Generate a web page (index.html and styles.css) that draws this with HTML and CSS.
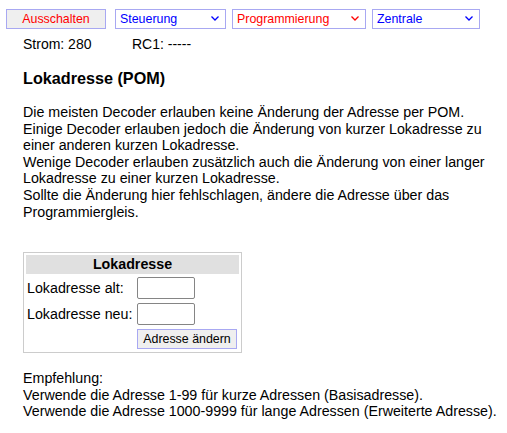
FILE: index.html
```html
<!DOCTYPE html>
<html lang="de">
<head>
<meta charset="utf-8">
<title>Lokadresse (POM)</title>
<link rel="stylesheet" href="styles.css">
</head>
<body>
<div class="topbar">
  <button class="btn power">Ausschalten</button>
  <span class="selwrap w1"><select class="sel blue"><option>Steuerung</option></select><svg class="chev" viewBox="0 0 8 5" width="8" height="5"><path d="M0.5 0.5 L4 4 L7.5 0.5" fill="none" stroke="#0000ff" stroke-width="1.3"/></svg></span>
  <span class="selwrap w2"><select class="sel red"><option>Programmierung</option></select><svg class="chev" viewBox="0 0 8 5" width="8" height="5"><path d="M0.5 0.5 L4 4 L7.5 0.5" fill="none" stroke="#ff0000" stroke-width="1.3"/></svg></span>
  <span class="selwrap w3"><select class="sel blue"><option>Zentrale</option></select><svg class="chev" viewBox="0 0 8 5" width="8" height="5"><path d="M0.5 0.5 L4 4 L7.5 0.5" fill="none" stroke="#0000ff" stroke-width="1.3"/></svg></span>
</div>
<div class="status">
  <span class="strom">Strom: 280</span>
  <span class="rc">RC1: -----</span>
</div>
<main class="content">
  <h1 class="title">Lokadresse (POM)</h1>
  <p class="text">Die meisten Decoder erlauben keine Änderung der Adresse per POM.<br>Einige Decoder erlauben jedoch die Änderung von kurzer Lokadresse zu<br>einer anderen kurzen Lokadresse.<br>Wenige Decoder erlauben zusätzlich auch die Änderung von einer langer<br>Lokadresse zu einer kurzen Lokadresse.<br>Sollte die Änderung hier fehlschlagen, ändere die Adresse über das<br>Programmiergleis.</p>
  <table class="form">
    <tr><th colspan="2" class="head">Lokadresse</th></tr>
    <tr><td class="lbl">Lokadresse alt:</td><td class="fld"><input class="inp" type="text"></td></tr>
    <tr><td class="lbl">Lokadresse neu:</td><td class="fld"><input class="inp" type="text"></td></tr>
    <tr><td class="lbl"></td><td class="fld"><button class="btn submit">Adresse ändern</button></td></tr>
  </table>
  <p class="text note">Empfehlung:<br>Verwende die Adresse 1-99 für kurze Adressen (Basisadresse).<br>Verwende die Adresse 1000-9999 für lange Adressen (Erweiterte Adresse).</p>
</main>
</body>
</html>
```
FILE: styles.css
```css
html, body {
  margin: 0;
  padding: 0;
  background: #ffffff;
  color: #000000;
  font-family: "Liberation Sans", Arial, sans-serif;
}

.topbar {
  display: flex;
  align-items: flex-start;
  padding: 9px 0 0 6px;
  height: 20px;
}

.btn {
  font-family: "Liberation Sans", Arial, sans-serif;
  font-size: 12.4px;
  background: #efefef;
  border: 1px solid #a8a8f2;
  border-radius: 0;
  box-sizing: border-box;
  height: 20px;
  padding: 0 4px;
  margin: 0;
  line-height: 16px;
}

.power {
  width: 100px;
  color: #ff0000;
}

.selwrap {
  position: relative;
  display: block;
  height: 20px;
}

.w1 { width: 111px; margin-left: 9px; }
.w2 { width: 134px; margin-left: 6px; }
.w3 { width: 108px; margin-left: 6px; }

.sel {
  appearance: none;
  -webkit-appearance: none;
  display: block;
  width: 100%;
  height: 20px;
  box-sizing: border-box;
  margin: 0;
  padding: 0 16px 0 4px;
  border: 1px solid #a8a8f2;
  border-radius: 0;
  background: #ffffff;
  font-family: "Liberation Sans", Arial, sans-serif;
  font-size: 12.4px;
  line-height: 18px;
}

.blue { color: #0000ff; }
.red { color: #ff0000; }

.chev {
  position: absolute;
  right: 7px;
  top: 7px;
  pointer-events: none;
}

.status {
  display: flex;
  margin-top: 7px;
  padding-left: 23px;
  font-size: 14px;
  line-height: 16.6px;
}

.strom { width: 109px; }

.content {
  padding-left: 23px;
}

.title {
  margin: 16px 0 0;
  font-size: 16.2px;
  line-height: 18.4px;
  font-weight: bold;
}

.text {
  margin: 17px 0 0;
  font-size: 14.25px;
  line-height: 16.6px;
  white-space: nowrap;
}

.form {
  margin-top: 32px;
  border: 1px solid #cccccc;
  border-spacing: 2px;
  width: 219px;
  font-size: 14.25px;
}

.form td, .form th {
  padding: 1px;
}

.head {
  background: #e0e0e0;
  font-weight: bold;
  text-align: center;
  height: 17px;
  line-height: 17px;
}

.lbl {
  width: 106px;
  text-align: left;
  white-space: nowrap;
  line-height: 16px;
}

.fld {
  text-align: left;
}

.inp {
  display: block;
  width: 58px;
  height: 22px;
  box-sizing: border-box;
  margin: 0;
  border: 1px solid #858585;
  border-radius: 2px;
  padding: 1px 2px;
  font-size: 13px;
}

.submit {
  display: block;
  width: 100px;
  color: #000000;
  padding: 0;
}

.note {
  margin-top: 17px;
}
```
